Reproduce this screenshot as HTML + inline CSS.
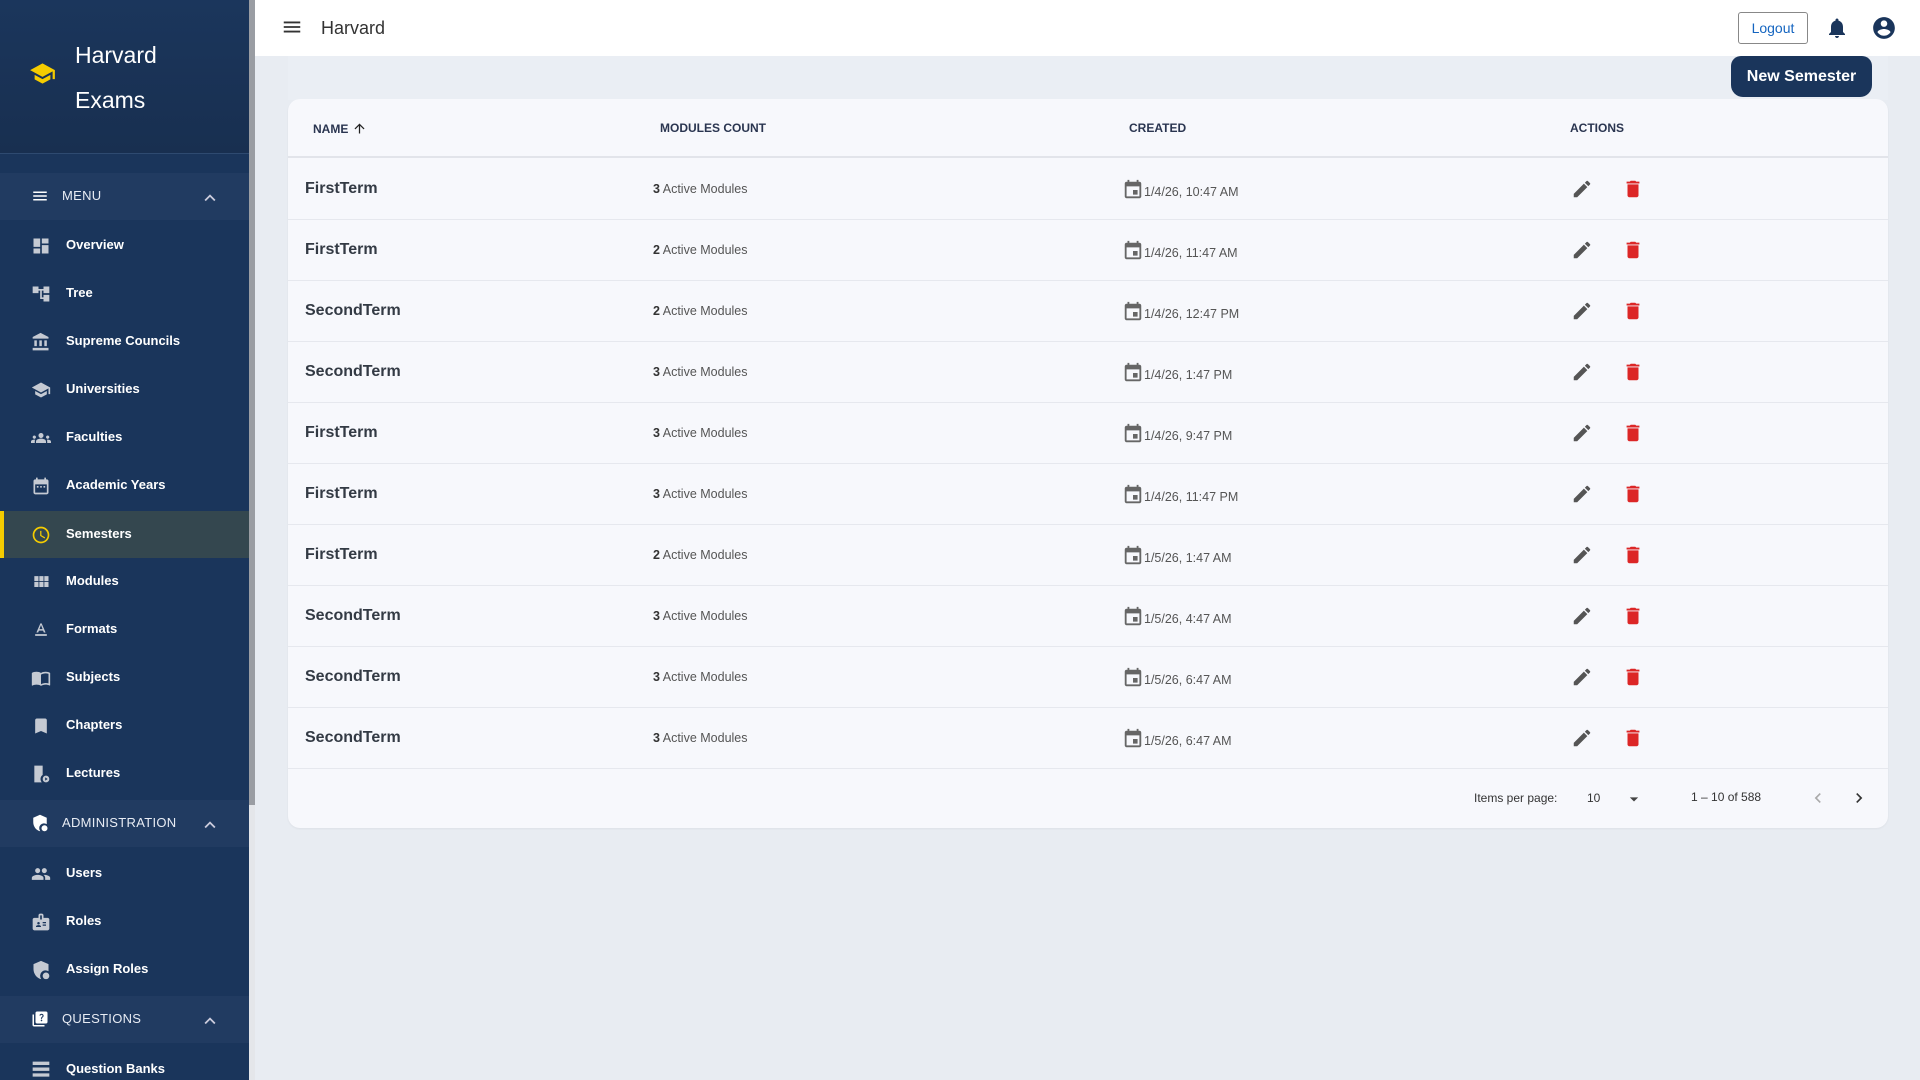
<!DOCTYPE html>
<html style="width:1920px;height:1080px;overflow:hidden"><head><meta charset="utf-8"><style>
*{box-sizing:border-box;margin:0;padding:0}
body{width:1920px;height:1080px;overflow:hidden;font-family:"Liberation Sans",sans-serif;background:#e8ecf2;position:relative}
.sb{position:absolute;left:0;top:0;width:249px;height:1080px;background:#1a355b;color:#fff}
.scroll{position:absolute;left:249px;top:0;width:6px;height:1080px;background:#e4e6ea}
.scroll i{position:absolute;left:0;top:0;width:6px;height:805px;background:#9a9da3}
.brand{position:absolute;left:0;top:0;width:249px;height:154px;background:linear-gradient(#1b365c,#182f50);border-bottom:1px solid #2e4a70}
.brand .t{position:absolute;left:75px;font-size:23px;color:#fff}
.sec{position:absolute;left:0;width:249px;height:47px;background:#213b61;font-size:13px;color:#e8ecf4;letter-spacing:.3px}
.sec span{position:absolute;left:62px;top:15px}
.sec svg.ic{position:absolute;left:31px;top:14px}
.sec .ch{position:absolute;left:199px;top:14px}
.it{position:absolute;left:0;width:249px;height:47px;font-size:13px;font-weight:bold;color:#fff}
.it span{position:absolute;left:66px;top:15px}
.it svg{position:absolute;left:31px;top:14px}
.act{background:#34474f;border-left:4px solid #f5cc00}
.top{position:absolute;left:255px;top:0;width:1665px;height:56px;background:#fff}
.card{position:absolute;left:288px;top:99px;width:1600px;height:729px;background:#f7f8fc;border-radius:12px;box-shadow:0 1px 2px rgba(0,0,0,.05)}
.hd{position:absolute;top:0;left:0;width:1600px;height:59px;border-bottom:2px solid #e2e4ea;font-size:12px;font-weight:bold;color:#2a3550}
.hd div{position:absolute;top:22px}
.row{position:absolute;left:0;width:1600px;height:61px;border-bottom:1px solid #e6e8ee}
.nm{position:absolute;left:17px;top:21px;font-size:16px;font-weight:bold;color:#333a44}
.mc{position:absolute;left:365px;top:23px;font-size:12.5px;color:#555}
.mc b{color:#333}
.dt{position:absolute;left:834px;top:20px;font-size:12.5px;color:#555}
.dt svg{vertical-align:-5px;margin-right:0}
.ed{position:absolute;left:1283px;top:19px}
.tr{position:absolute;left:1334px;top:19px}
.ft{position:absolute;top:791px;font-size:12px;color:#333}
</style></head><body>
<div class="sb">
 <div class="brand">
  <svg style="position:absolute;left:29px;top:60px" width="27" height="27" viewBox="0 0 24 24"><path fill="#f5cc00" d="M5 13.18v4L12 21l7-3.82v-4L12 17l-7-3.82zM12 3L1 9l11 6 9-4.91V17h2V9L12 3z"/></svg>
  <div class="t" style="top:42px">Harvard</div>
  <div class="t" style="top:87px">Exams</div>
 </div>
 <div class="sec" style="top:173px"><svg class="ic" width="18" height="18" viewBox="0 0 24 24"><path fill="#fff" d="M3 18h18v-2H3v2zm0-5h18v-2H3v2zm0-7v2h18V6H3z"/></svg><span>MENU</span><svg class="ch" width="22" height="22" viewBox="0 0 24 24"><path fill="#ccd" d="M7.41 15.41L12 10.83l4.59 4.58L18 14l-6-6-6 6z"/></svg></div>
 <div class="it" style="top:222px"><svg width="20" height="20" viewBox="0 0 24 24"><path fill="#c5cad3" d="M3 13h8V3H3v10zm0 8h8v-6H3v6zm10 0h8V11h-8v10zm0-18v6h8V3h-8z"/></svg><span>Overview</span></div>
 <div class="it" style="top:270px"><svg width="20" height="20" viewBox="0 0 24 24"><path fill="#c5cad3" d="M22 11V3h-7v3H9V3H2v8h7V8h2v10h4v3h7v-8h-7v3h-2V8h2v3z"/></svg><span>Tree</span></div>
 <div class="it" style="top:318px"><svg width="20" height="20" viewBox="0 0 24 24"><path fill="#c5cad3" d="M4 10v7h3v-7H4zm6 0v7h3v-7h-3zM2 22h19v-3H2v3zm14-12v7h3v-7h-3zm-4.5-9L2 6v2h19V6l-9.5-5z"/></svg><span>Supreme Councils</span></div>
 <div class="it" style="top:366px"><svg width="20" height="20" viewBox="0 0 24 24"><path fill="#c5cad3" d="M5 13.18v4L12 21l7-3.82v-4L12 17l-7-3.82zM12 3L1 9l11 6 9-4.91V17h2V9L12 3z"/></svg><span>Universities</span></div>
 <div class="it" style="top:414px"><svg width="20" height="20" viewBox="0 0 24 24"><path fill="#c5cad3" d="M12 12.75c1.63 0 3.07.39 4.24.9 1.08.48 1.76 1.56 1.76 2.73V18H6v-1.61c0-1.180.68-2.26 1.76-2.73 1.17-.52 2.61-.91 4.240-.91zM4 13c1.1 0 2-.9 2-2s-.9-2-2-2-2 .9-2 2 .9 2 2 2zm-4 5v-1.57c0-.81.48-1.53 1.22-1.85C2.07 14.21 3 14 4 14c.34 0 .66.03.98.06-.28.57-.43 1.19-.43 1.86V18H0zm20-5c1.1 0 2-.9 2-2s-.9-2-2-2-2 .9-2 2 .9 2 2 2zm4 5h-4.55v-2.08c0-.67-.15-1.3-.43-1.86.32-.03.64-.06.98-.06 1 0 1.93.21 2.78.58A2.01 2.01 0 0 1 24 16.43V18zM12 6c1.66 0 3 1.34 3 3s-1.34 3-3 3-3-1.34-3-3 1.34-3 3-3z"/></svg><span>Faculties</span></div>
 <div class="it" style="top:462px"><svg width="20" height="20" viewBox="0 0 24 24"><path fill="#c5cad3" d="M19 4h-1V2h-2v2H8V2H6v2H5c-1.1 0-2 .9-2 2v14c0 1.1.9 2 2 2h14c1.1 0 2-.9 2-2V6c0-1.1-.9-2-2-2zm0 16H5V10h14v10zM7 12h2v2H7zm4 0h2v2h-2zm4 0h2v2h-2z"/></svg><span>Academic Years</span></div>
 <div class="it act" style="top:511px"><svg style="left:27px" width="20" height="20" viewBox="0 0 24 24"><path fill="#f5cc00" d="M11.99 2C6.47 2 2 6.48 2 12s4.47 10 9.99 10C17.52 22 22 17.52 22 12S17.52 2 11.99 2zM12 20c-4.42 0-8-3.58-8-8s3.58-8 8-8 8 3.58 8 8-3.58 8-8 8zm.5-13H11v6l5.25 3.15.75-1.23-4.5-2.67z"/></svg><span style="left:62px">Semesters</span></div>
 <div class="it" style="top:558px"><svg width="20" height="20" viewBox="0 0 24 24"><path fill="#c5cad3" d="M4 11h5V5H4v6zm0 7h5v-6H4v6zm6 0h5v-6h-5v6zm6 0h5v-6h-5v6zm-6-7h5V5h-5v6zm6-6v6h5V5h-5z"/></svg><span>Modules</span></div>
 <div class="it" style="top:606px"><svg width="20" height="20" viewBox="0 0 24 24"><path fill="#c5cad3" d="M5 17v2h14v-2H5zm4.5-4.2h5l.9 2.2h2.1L12.75 4h-1.5L6.5 15h2.1l.9-2.2zM12 5.98L13.870 11h-3.74L12 5.98z"/></svg><span>Formats</span></div>
 <div class="it" style="top:654px"><svg width="20" height="20" viewBox="0 0 24 24"><path fill="#c5cad3" d="M21 5c-1.11-.35-2.33-.5-3.5-.5-1.95 0-4.05.4-5.5 1.5-1.45-1.1-3.55-1.5-5.5-1.5S2.45 4.9 1 6v14.65c0 .25.25.5.5.5.1 0 .15-.05.25-.05C3.1 20.45 5.05 20 6.5 20c1.95 0 4.05.4 5.5 1.5 1.35-.85 3.8-1.5 5.5-1.5 1.65 0 3.35.3 4.75 1.050.1.05.15.05.25.05.25 0 .5-.25.5-.5V6c-.6-.45-1.25-.75-2-1zm0 13.5c-1.1-.35-2.3-.5-3.5-.5-1.7 0-4.15.65-5.5 1.5V8c1.35-.85 3.8-1.5 5.5-1.5 1.2 0 2.4.15 3.5.5v11.5z"/></svg><span>Subjects</span></div>
 <div class="it" style="top:702px"><svg width="20" height="20" viewBox="0 0 24 24"><path fill="#c5cad3" d="M17 3H7c-1.1 0-2 .9-2 2v16l7-3 7 3V5c0-1.1-.9-2-2-2z"/></svg><span>Chapters</span></div>
 <div class="it" style="top:750px"><svg width="20" height="20" viewBox="0 0 24 24"><path fill="#c5cad3" d="M4 2h10v11a6 6 0 0 0-1 9H4zM18 14a4 4 0 1 1 0 8 4 4 0 0 1 0-8zm-1 2v4l3-2z"/></svg><span>Lectures</span></div>
 <div class="sec" style="top:800px"><svg class="ic" width="18" height="18" viewBox="0 0 24 24"><path fill="#fff" d="M12 1L3 5v6c0 5.55 3.84 10.74 9 12 .1-.02.2-.05.3-.08A6.5 6.5 0 0 1 21 13.5V5l-9-4zm6 14a4 4 0 1 0 0 8 4 4 0 0 0 0-8z"/></svg><span>ADMINISTRATION</span><svg class="ch" width="22" height="22" viewBox="0 0 24 24"><path fill="#ccd" d="M7.41 15.41L12 10.83l4.59 4.58L18 14l-6-6-6 6z"/></svg></div>
 <div class="it" style="top:850px"><svg width="20" height="20" viewBox="0 0 24 24"><path fill="#c5cad3" d="M16 11c1.66 0 2.99-1.34 2.99-3S17.66 5 16 5c-1.66 0-3 1.34-3 3s1.34 3 3 3zm-8 0c1.66 0 2.99-1.34 2.99-3S9.66 5 8 5C6.34 5 5 6.34 5 8s1.34 3 3 3zm0 2c-2.33 0-7 1.17-7 3.5V19h14v-2.5c0-2.33-4.67-3.5-7-3.5zm8 0c-.29 0-.62.02-.97.05 1.16.84 1.97 1.97 1.97 3.45V19h6v-2.5c0-2.33-4.67-3.5-7-3.5z"/></svg><span>Users</span></div>
 <div class="it" style="top:898px"><svg width="20" height="20" viewBox="0 0 24 24"><path fill="#c5cad3" d="M20 7h-5V4c0-1.1-.9-2-2-2h-2c-1.1 0-2 .9-2 2v3H4c-1.1 0-2 .9-2 2v11c0 1.1.9 2 2 2h16c1.1 0 2-.9 2-2V9c0-1.1-.9-2-2-2zM11 4h2v5h-2V4zM9 12a1.5 1.5 0 1 1 0 3 1.5 1.5 0 0 1 0-3zm3 6H6v-.75c0-1 2-1.5 3-1.5s3 .5 3 1.5V18zm6-1.5h-4V15h4v1.5zm0-3h-4V12h4v1.5z"/></svg><span>Roles</span></div>
 <div class="it" style="top:946px"><svg width="20" height="20" viewBox="0 0 24 24"><path fill="#c5cad3" d="M12 1L3 5v6c0 5.55 3.84 10.74 9 12 .1-.02.2-.05.3-.08A6.5 6.5 0 0 1 21 13.5V5l-9-4zm6 14a4 4 0 1 0 0 8 4 4 0 0 0 0-8z"/></svg><span>Assign Roles</span></div>
 <div class="sec" style="top:996px"><svg class="ic" width="18" height="18" viewBox="0 0 24 24"><path fill="#fff" d="M4 6H2v14c0 1.1.9 2 2 2h14v-2H4V6zm16-4H8c-1.1 0-2 .9-2 2v12c0 1.1.9 2 2 2h12c1.1 0 2-.9 2-2V4c0-1.1-.9-2-2-2zm-5.99 13c-.59 0-1.05-.47-1.05-1.05 0-.59.47-1.04 1.05-1.04.59 0 1.04.45 1.04 1.04 0 .58-.45 1.05-1.04 1.050zm2.5-6.17c-.63.93-1.23 1.21-1.56 1.81-.13.24-.18.4-.18 1.18h-1.52c0-.41-.06-1.08.26-1.65.41-.73 1.18-1.16 1.63-1.8.48-.68.21-1.94-1.14-1.94-.88 0-1.32.67-1.5 1.23l-1.37-.57C11.51 5.96 12.52 5 13.99 5c1.23 0 2.08.56 2.51 1.26.37.61.59 1.73.01 2.57z"/></svg><span>QUESTIONS</span><svg class="ch" width="22" height="22" viewBox="0 0 24 24"><path fill="#ccd" d="M7.41 15.41L12 10.83l4.59 4.58L18 14l-6-6-6 6z"/></svg></div>
 <div class="it" style="top:1046px"><svg width="20" height="20" viewBox="0 0 24 24"><path fill="#c5cad3" d="M2 20h20v-4H2v4zm0-18v4h20V2H2zm0 11h20V9H2v4z"/></svg><span>Question Banks</span></div>
</div>
<div class="scroll"><i></i></div>
<div class="top">
 <svg style="position:absolute;left:26px;top:16px" width="22" height="22" viewBox="0 0 24 24"><path fill="#333" d="M3 18h18v-2H3v2zm0-5h18v-2H3v2zm0-7v2h18V6H3z"/></svg>
 <div style="position:absolute;left:66px;top:18px;font-size:18px;color:#333">Harvard</div>
 <div style="position:absolute;left:1483px;top:12px;width:70px;height:32px;border:1px solid #888;border-radius:3px;color:#1565c0;font-size:14px;text-align:center;line-height:30px">Logout</div>
 <svg style="position:absolute;left:1570px;top:16px" width="24" height="24" viewBox="0 0 24 24"><path fill="#1a355b" d="M12 22c1.1 0 2-.9 2-2h-4c0 1.1.89 2 2 2zm6-6v-5c0-3.07-1.64-5.64-4.5-6.32V4c0-.83-.67-1.5-1.5-1.5s-1.5.67-1.5 1.5v.68C7.63 5.36 6 7.92 6 11v5l-2 2v1h16v-1l-2-2z"/></svg>
 <svg style="position:absolute;left:1616px;top:15px" width="26" height="26" viewBox="0 0 24 24"><path fill="#1a355b" d="M12 2C6.48 2 2 6.48 2 12s4.48 10 10 10 10-4.48 10-10S17.52 2 12 2zm0 3c1.66 0 3 1.34 3 3s-1.34 3-3 3-3-1.34-3-3 1.34-3 3-3zm0 14.2c-2.5 0-4.71-1.28-6-3.22.03-1.99 4-3.08 6-3.08 1.99 0 5.97 1.09 6 3.08-1.29 1.94-3.5 3.220-6 3.22z"/></svg>
</div>
<div style="position:absolute;left:288px;top:56px;width:1600px;height:44px;background:#eaeef4"></div>
<div style="position:absolute;left:1731px;top:56px;width:141px;height:41px;background:#1a355b;border-radius:10px 10px 12px 12px;color:#fff;font-weight:bold;font-size:16px;text-align:center;line-height:42px">New Semester</div>
<div class="card">
 <div class="hd"><div style="left:25px">NAME <svg style="vertical-align:-3px" width="15" height="15" viewBox="0 0 24 24"><path fill="#222" d="M4 12l1.41 1.41L11 7.83V20h2V7.83l5.58 5.59L20 12l-8-8-8 8z"/></svg></div><div style="left:372px">MODULES COUNT</div><div style="left:841px">CREATED</div><div style="left:1282px">ACTIONS</div></div>
 <div id="rows"></div>
 <div class="ft" style="left:1186px;top:692px">Items per page:</div>
 <div class="ft" style="left:1299px;top:692px">10</div>
 <svg style="position:absolute;left:1336px;top:690px" width="20" height="20" viewBox="0 0 24 24"><path fill="#444" d="M7 10l5 5 5-5z"/></svg>
 <div class="ft" style="left:1403px;top:691px">1 – 10 of 588</div>
 <svg style="position:absolute;left:1520px;top:689px" width="20" height="20" viewBox="0 0 24 24"><path fill="#aaa" d="M15.41 7.41L14 6l-6 6 6 6 1.41-1.41L10.83 12z"/></svg>
 <svg style="position:absolute;left:1561px;top:689px" width="20" height="20" viewBox="0 0 24 24"><path fill="#333" d="M10 6L8.59 7.41 13.17 12l-4.58 4.59L10 18l6-6z"/></svg>
</div>
<script>
var d=[["FirstTerm",3,"1/4/26, 10:47 AM"],["FirstTerm",2,"1/4/26, 11:47 AM"],["SecondTerm",2,"1/4/26, 12:47 PM"],["SecondTerm",3,"1/4/26, 1:47 PM"],["FirstTerm",3,"1/4/26, 9:47 PM"],["FirstTerm",3,"1/4/26, 11:47 PM"],["FirstTerm",2,"1/5/26, 1:47 AM"],["SecondTerm",3,"1/5/26, 4:47 AM"],["SecondTerm",3,"1/5/26, 6:47 AM"],["SecondTerm",3,"1/5/26, 6:47 AM"]];
var h="";d.forEach(function(r,i){h+='<div class="row" style="top:'+(60+i*61)+'px"><div class="nm">'+r[0]+'</div><div class="mc"><b>'+r[1]+'</b> Active Modules</div><div class="dt"><svg width="22" height="22" viewBox="0 0 24 24"><path fill="#666" d="M19 3h-1V1h-2v2H8V1H6v2H5c-1.11 0-2 .9-2 2v14c0 1.1.89 2 2 2h14c1.1 0 2-.9 2-2V5c0-1.1-.9-2-2-2zm0 16H5V8h14v11zM12 12h5v5h-5z"/></svg>'+r[2]+'</div><svg class="ed" width="22" height="22" viewBox="0 0 24 24"><path fill="#555" d="M3 17.25V21h3.75L17.81 9.94l-3.75-3.75L3 17.25zM20.71 7.04a1 1 0 0 0 0-1.41l-2.34-2.34a1 1 0 0 0-1.41 0l-1.83 1.83 3.75 3.75 1.83-1.83z"/></svg><svg class="tr" width="22" height="22" viewBox="0 0 24 24"><path fill="#dc2626" d="M6 19c0 1.1.9 2 2 2h8c1.1 0 2-.9 2-2V7H6v12zM19 4h-3.5l-1-1h-5l-1 1H5v2h14V4z"/></svg></div>'});
document.getElementById("rows").innerHTML=h;
</script>
</body></html>
